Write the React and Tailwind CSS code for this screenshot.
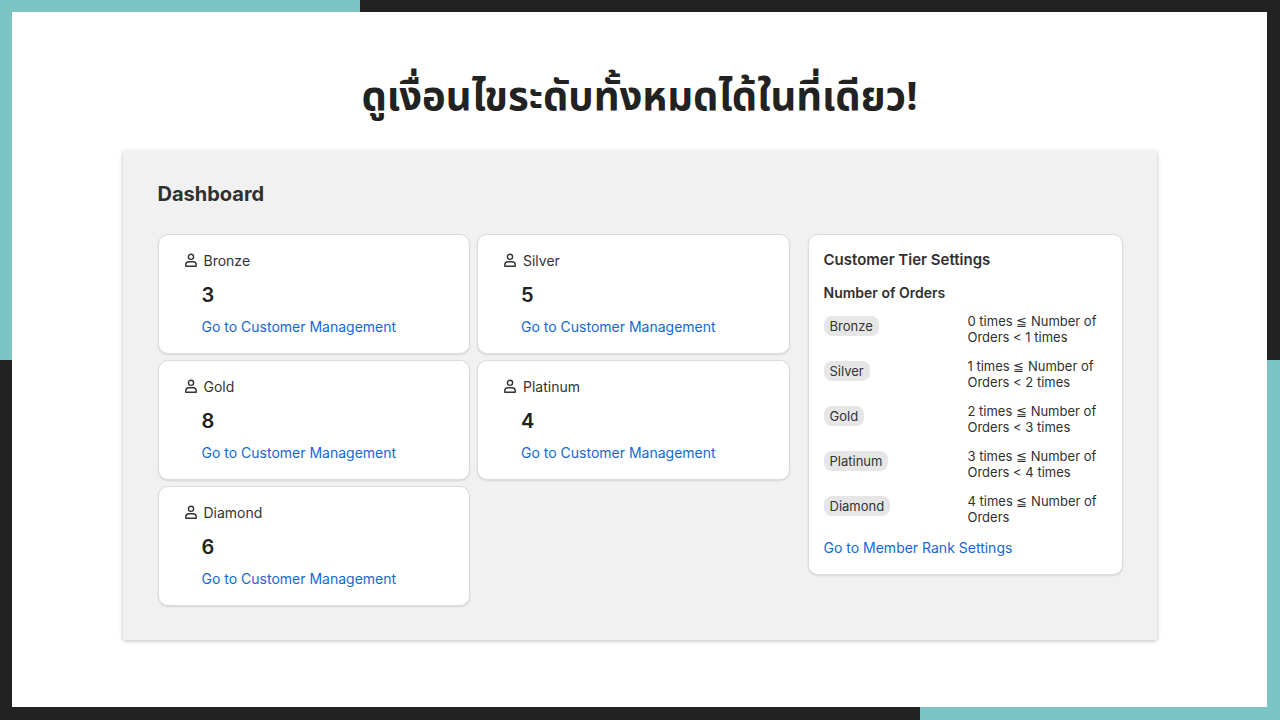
import React from "react";

const tiers = [["Bronze", 3], ["Silver", 5], ["Gold", 8], ["Platinum", 4], ["Diamond", 6]];
const rules = [
  ["Bronze", "0 times ≦ Number of", "Orders < 1 times"],
  ["Silver", "1 times ≦ Number of", "Orders < 2 times"],
  ["Gold", "2 times ≦ Number of", "Orders < 3 times"],
  ["Platinum", "3 times ≦ Number of", "Orders < 4 times"],
  ["Diamond", "4 times ≦ Number of", "Orders"],
];

function User() {
  return (
    <svg width="16" height="16" viewBox="0 0 16 16" fill="none" stroke="#333" strokeWidth="1.4">
      <circle cx="8" cy="4.8" r="2.6" />
      <path d="M2.8 14.2v-1.4c0-1.8 1.4-3 3.2-3h4c1.8 0 3.2 1.2 3.2 3v1.4z" strokeLinejoin="round" />
    </svg>
  );
}

function Card({ name, n }) {
  return (
    <div className="bg-white rounded-[10px] border border-[#dcdcdc] shadow-[0_1px_2px_rgba(0,0,0,0.12)] h-[120px] pl-[24px] pt-[16px]">
      <div className="flex items-center gap-[3px] h-[18px]">
        <User />
        <span className="ml-[2px] text-[14px] text-[#333]">{name}</span>
      </div>
      <div className="pl-[19px]">
        <div className="mt-[14px] text-[20px] font-semibold text-[#222] leading-[24px]">{n}</div>
        <div className="mt-[9px] text-[14px] text-[#1468d6]">Go to Customer Management</div>
      </div>
    </div>
  );
}

export default function App() {
  return (
    <div className="relative w-[1280px] h-[720px] bg-[#222222] overflow-hidden" style={{ fontFamily: "Inter, 'Noto Sans Thai', 'Noto Sans', sans-serif" }}>
      <div className="absolute left-0 top-0 w-[360px] h-[360px] bg-[#7ac4c5]" />
      <div className="absolute right-0 top-[360px] w-[360px] h-[360px] bg-[#7ac4c5]" />
      <div className="absolute left-[920px] bottom-0 w-[360px] h-[20px] bg-[#7ac4c5]" />
      <div className="absolute left-[12px] top-[12px] w-[1255px] h-[695px] bg-white flex flex-col items-center">
        <h1 className="mt-[58px] text-[40px] font-bold text-[#222] leading-[56px]" style={{ fontFamily: "'Noto Sans Thai', 'Noto Sans', 'DejaVu Sans', sans-serif" }}>ดูเงื่อนไขระดับทั้งหมดได้ในที่เดียว!</h1>
        <div className="mt-[25px] w-[1034px] h-[489px] bg-[#f1f1f1] shadow-[0_1px_4px_rgba(0,0,0,0.25)] pl-[35px] pt-[30px]">
          <div className="text-[20px] font-bold text-[#303030] leading-[26px]">Dashboard</div>
          <div className="mt-[27px] flex gap-[18px]">
            <div className="grid grid-cols-2 w-[632px] gap-x-[7px] gap-y-[6px] auto-rows-[120px]">
              {tiers.map(([t, n]) => <Card key={t} name={t} n={n} />)}
            </div>
            <div className="bg-white rounded-[10px] border border-[#dcdcdc] shadow-[0_1px_2px_rgba(0,0,0,0.12)] w-[315px] h-[341px] px-[15px] pt-[15px]">
              <div className="text-[15px] font-semibold text-[#303030] leading-[20px]">Customer Tier Settings</div>
              <div className="mt-[13px] text-[14px] font-semibold text-[#303030] leading-[20px]">Number of Orders</div>
              <div className="mt-[10px] flex flex-col gap-[13px]">
                {rules.map(([t, a, b]) => (
                  <div key={t} className="flex h-[32px]">
                    <div className="w-[144px]">
                      <span className="inline-block bg-[#e6e6e6] rounded-[8px] px-[6px] text-[13px] leading-[20px] text-[#333]">{t}</span>
                    </div>
                    <div className="text-[13px] leading-[16px] text-[#303030]">{a}<br />{b}</div>
                  </div>
                ))}
              </div>
              <div className="mt-[12px] text-[14px] text-[#1468d6]">Go to Member Rank Settings</div>
            </div>
          </div>
        </div>
      </div>
    </div>
  );
}
